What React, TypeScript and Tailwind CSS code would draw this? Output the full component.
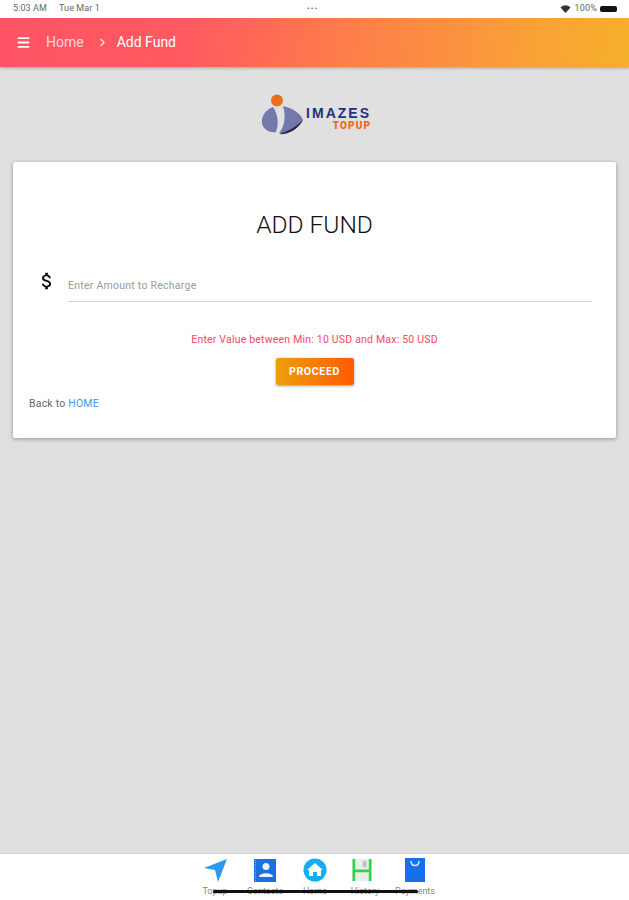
import { ChevronRight, Menu } from "lucide-react";
import { MdAttachMoney } from "react-icons/md";

const NavItem = ({ label, children }: { label: string; children: React.ReactNode }) => (
  <div className="flex w-[50px] flex-col items-center">
    <div className="flex h-[26px] w-[26px] items-center justify-center">{children}</div>
    <span className="mt-[3px] text-[9px] leading-[10px] text-[#888]">{label}</span>
  </div>
);

export default function App() {
  return (
    <div className="relative flex h-[900px] w-[629px] flex-col overflow-hidden bg-[#e0e0e0] font-['Roboto',sans-serif]">
      {/* status bar */}
      <div className="relative flex h-[18px] items-center justify-between bg-white pl-[13px] pr-[12px] text-[9px] text-[#666]">
        <div className="flex gap-[12px] tracking-[0.1px]">
          <span>5:03 AM</span>
          <span>Tue Mar 1</span>
        </div>
        <div className="flex items-center gap-[3px]">
          <svg width="11" height="8" viewBox="0 0 10 8">
            <path d="M0 2.5C3 -0.5 7 -0.5 10 2.5L5 8Z" fill="#333" />
          </svg>
          <span className="tracking-[0.2px]">100%</span>
          <div className="h-[6px] w-[17px] rounded-[2px] bg-[#111]" />
        </div>
        <div className="absolute left-[307px] top-[3px] text-[8px] tracking-[1px]">•••</div>
      </div>

      {/* header */}
      <div className="flex h-[49px] items-center bg-[linear-gradient(100deg,#ff5364_0%,#ff5a60_30%,#fd8148_58%,#f9a236_85%,#f6b02a_100%)] pl-[16px] text-white shadow-[0_1px_3px_rgba(0,0,0,0.3)]">
        <Menu size={15} strokeWidth={3} />
        <span className="ml-[15px] text-[14px] text-white/75">Home</span>
        <ChevronRight size={13} strokeWidth={2} className="ml-[12px] text-white/90" />
        <span className="ml-[8px] text-[14px]">Add Fund</span>
      </div>

      {/* logo */}
      <div className="mt-[27px] flex">
        <div className="ml-[260px] flex h-[41px] items-center">
          <svg width="44" height="41" viewBox="0 0 44 41">
            <circle cx="17" cy="6.5" r="6" fill="#e8701e" />
            <path d="M13 13C5 16 1 23 2 30C4 36 10 39 16 38C19 30 18 20 13 13Z" fill="#7478ad" />
            <path d="M23 12C33 14 41 20 43 26C38 35 28 40 19 39C25 32 26 22 23 12Z" fill="#7478ad" />
            <path d="M43 26C38 36 27 41 19 40C27 38 36 33 43 26Z" fill="#26264a" />
          </svg>
          <div className="flex w-[66px] flex-col items-end pt-[8px]">
            <span className="-mr-[1px] text-[14px] leading-[13px] font-bold tracking-[2px] text-[#25307f] font-['Liberation_Sans',sans-serif]">IMAZES</span>
            <span className="-mr-[1px] text-[10px] leading-[11px] font-black tracking-[1.1px] text-[#ef6a12]">TOPUP</span>
          </div>
        </div>
      </div>

      {/* card */}
      <div className="mx-[13px] mt-[27px] h-[276px] rounded-[2px] bg-white px-[16px] pt-[48px] shadow-[0_1px_4px_rgba(0,0,0,0.35)]">
        <h1 className="text-center text-[24.5px] leading-[30px] font-light text-[#111]">ADD FUND</h1>
        <div className="mt-[29px] flex items-start">
          <MdAttachMoney size={22} className="ml-[7px] mt-[1px] text-[#111]" />
          <div className="ml-[10px] mr-[8px] h-[33px] flex-1 border-b border-[#d2d2d2] pt-[9px] text-[10.5px] tracking-[0.25px] text-[#9a9a9a]">
            Enter Amount to Recharge
          </div>
        </div>
        <p className="mt-[31px] text-center text-[10.5px] leading-[14px] tracking-[0.2px] text-[#f5485f]">
          Enter Value between Min: 10 USD and Max: 50 USD
        </p>
        <div className="mt-[11px] flex justify-center">
          <button className="h-[27px] w-[78px] rounded-[2px] bg-[linear-gradient(90deg,#ee9e0a,#fe5b02)] text-[10.5px] font-bold tracking-[0.7px] text-white shadow-[0_1px_3px_rgba(0,0,0,0.4)]">
            PROCEED
          </button>
        </div>
        <p className="mt-[12px] text-[10.5px] leading-[14px] tracking-[0.2px] text-[#666]">
          Back to <span className="text-[#3f97e8]">HOME</span>
        </p>
      </div>

      {/* bottom nav */}
      <div className="mt-auto flex h-[46px] justify-center bg-white pt-[3px] pl-[1px] shadow-[0_-1px_0_#d4d4d4]">
        <NavItem label="Topup">
          <svg width="24" height="24" viewBox="0 0 24 24">
            <path d="M1 10L24 1L15 24L12 12Z" fill="#2a9bf0" />
          </svg>
        </NavItem>
        <NavItem label="Contacts">
          <svg width="22" height="23" viewBox="0 0 22 23">
            <rect width="22" height="23" fill="#1c6fe0" />
            <path d="M1.5 1V22" stroke="#7fb0f2" strokeWidth="1" strokeDasharray="1 1" />
            <circle cx="12" cy="7.5" r="3.5" fill="#e6f0ff" />
            <path d="M5 18C5 13 19 13 19 18Z" fill="#e6f0ff" />
          </svg>
        </NavItem>
        <NavItem label="Home">
          <svg width="24" height="24" viewBox="0 0 24 24">
            <circle cx="12" cy="12" r="11.5" fill="#12aef0" />
            <path d="M12 5L20 12H18V18H14V14H10V18H6V12H4Z" fill="#fff" />
          </svg>
        </NavItem>
        <NavItem label="History">
          <svg width="22" height="24" viewBox="0 0 22 24" className="mr-[6px]">
            <rect x="1" width="20" height="24" fill="#e8efe8" />
            <path d="M2 0V24M20 0V24M2 13H20" stroke="#35d04f" strokeWidth="3" fill="none" />
            <rect x="12" y="2" width="4" height="7" fill="#b9c6b9" />
          </svg>
        </NavItem>
        <NavItem label="Payments">
          <svg width="20" height="24" viewBox="0 0 20 24">
            <rect width="20" height="24" fill="#1570ea" />
            <path d="M6 3C6 9 14 9 14 3" stroke="#dbe9ff" strokeWidth="1.5" fill="none" />
          </svg>
        </NavItem>
      </div>

      {/* home indicator */}
      <div className="absolute bottom-[7px] left-[213px] h-[3px] w-[205px] rounded-full bg-[#111]" />
    </div>
  );
}
